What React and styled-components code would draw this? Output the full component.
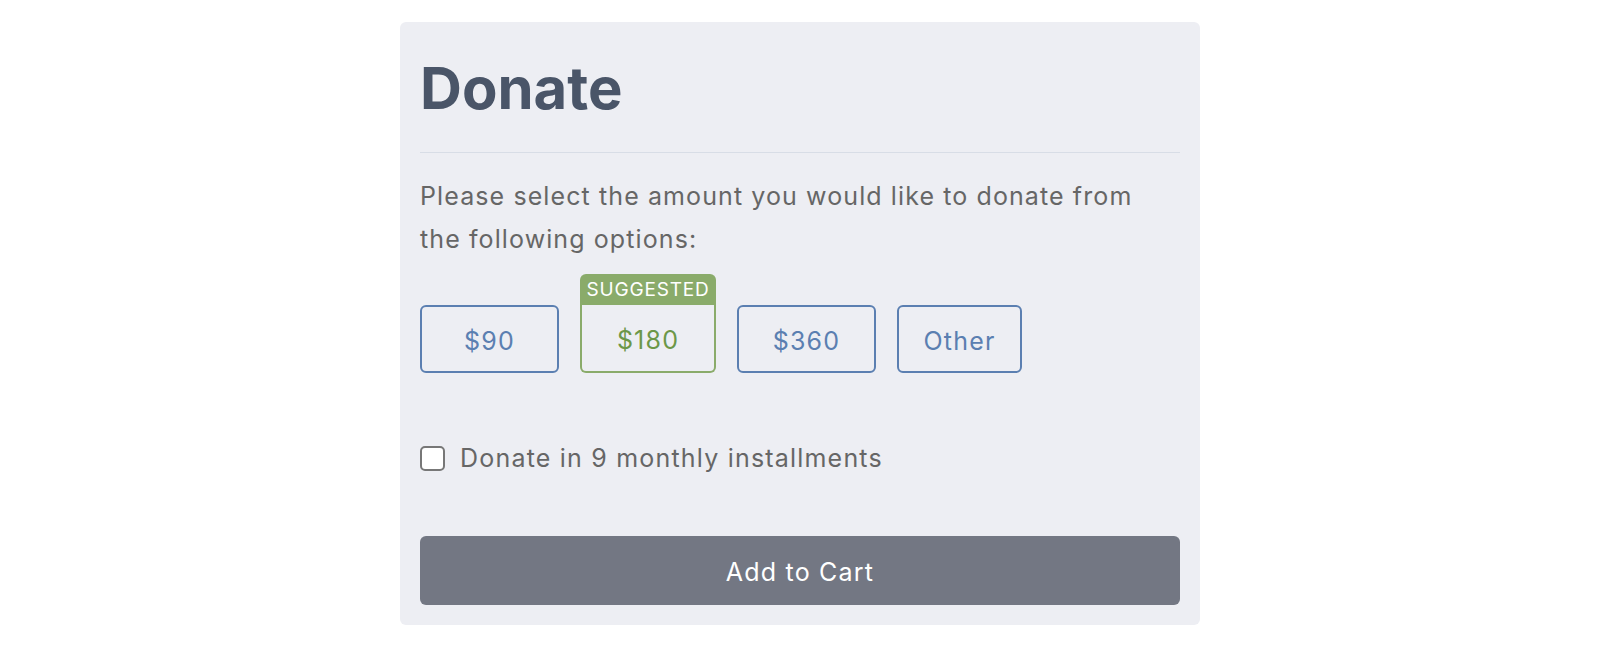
import React, { useState } from 'react';
import styled, { createGlobalStyle } from 'styled-components';

const GlobalStyle = createGlobalStyle`
  body {
    margin: 0;
    background: #ffffff;
    font-family: Inter, "Noto Sans", sans-serif;
  }
  * { box-sizing: border-box; }
`

const Page = styled.div`
  display: flex;
  justify-content: center;
  padding-top: 22px;
`

const Card = styled.div`
  width: 800px;
  background: #edeef3;
  border-radius: 6px;
  padding: 20px;
`

const Title = styled.h1`
  margin: 11px 0 0;
  padding-bottom: 29px;
  border-bottom: 1px solid #d8dde6;
  font-size: 58px;
  line-height: 70px;
  font-weight: 700;
  color: #4a5568;
`

const Intro = styled.p`
  margin: 22px 0 0;
  font-size: 25px;
  letter-spacing: 1.1px;
  line-height: 43px;
  color: #666666;
`

const Options = styled.div`
  display: flex;
  gap: 21px;
  margin-top: 44px;
`

const Amount = styled.button`
  position: relative;
  width: ${p => p.w}px;
  height: 68px;
  padding: 3px 0 0;
  background: transparent;
  border: 2px solid ${p => (p.suggested ? '#8aab6a' : '#5b7fb1')};
  border-radius: ${p => (p.suggested ? '0 0 6px 6px' : '6px')};
  border-top-width: ${p => (p.suggested ? '0' : '2px')};
  color: ${p => (p.suggested ? '#6c9748' : '#5b7fb1')};
  font-family: Inter, "Noto Sans", sans-serif;
  font-size: 25px;
  letter-spacing: 1.2px;
  cursor: pointer;
`

const Badge = styled.span`
  position: absolute;
  left: -2px;
  right: -2px;
  bottom: 100%;
  height: 31px;
  display: flex;
  align-items: center;
  justify-content: center;
  background: #8aab6a;
  border-radius: 6px 6px 0 0;
  color: #ffffff;
  font-size: 19px;
  letter-spacing: 0.8px;
  text-transform: uppercase;
`

const CheckRow = styled.label`
  display: flex;
  align-items: center;
  gap: 15px;
  margin-top: 71px;
  font-size: 25px;
  letter-spacing: 1.2px;
  line-height: 29px;
  color: #666666;
  cursor: pointer;
`

const Box = styled.input`
  appearance: none;
  width: 25px;
  height: 25px;
  margin: 0;
  background: #ffffff;
  border: 2px solid #777777;
  border-radius: 5px;
  cursor: pointer;
  &:checked {
    background: #5b7fb1;
    border-color: #5b7fb1;
  }
`

const CartButton = styled.button`
  display: block;
  width: 100%;
  height: 69px;
  margin-top: 63px;
  padding: 2px 0 0;
  border: none;
  border-radius: 6px;
  background: #737783;
  color: #ffffff;
  font-family: Inter, "Noto Sans", sans-serif;
  font-size: 25px;
  letter-spacing: 1.2px;
  cursor: pointer;
`

const amounts = [
  { label: '$90', w: 139 },
  { label: '$180', w: 136, suggested: true },
  { label: '$360', w: 139 },
  { label: 'Other', w: 125 },
]

export default function App() {
  const [monthly, setMonthly] = useState(false)

  return (
    <>
      <GlobalStyle />
      <Page>
        <Card>
          <Title>Donate</Title>
          <Intro>Please select the amount you would like to donate from the following options:</Intro>
          <Options>
            {amounts.map(a => (
              <Amount key={a.label} w={a.w} suggested={a.suggested}>
                {a.suggested && <Badge>Suggested</Badge>}
                {a.label}
              </Amount>
            ))}
          </Options>
          <CheckRow>
            <Box type="checkbox" checked={monthly} onChange={() => setMonthly(!monthly)} />
            Donate in 9 monthly installments
          </CheckRow>
          <CartButton>Add to Cart</CartButton>
        </Card>
      </Page>
    </>
  )
}
